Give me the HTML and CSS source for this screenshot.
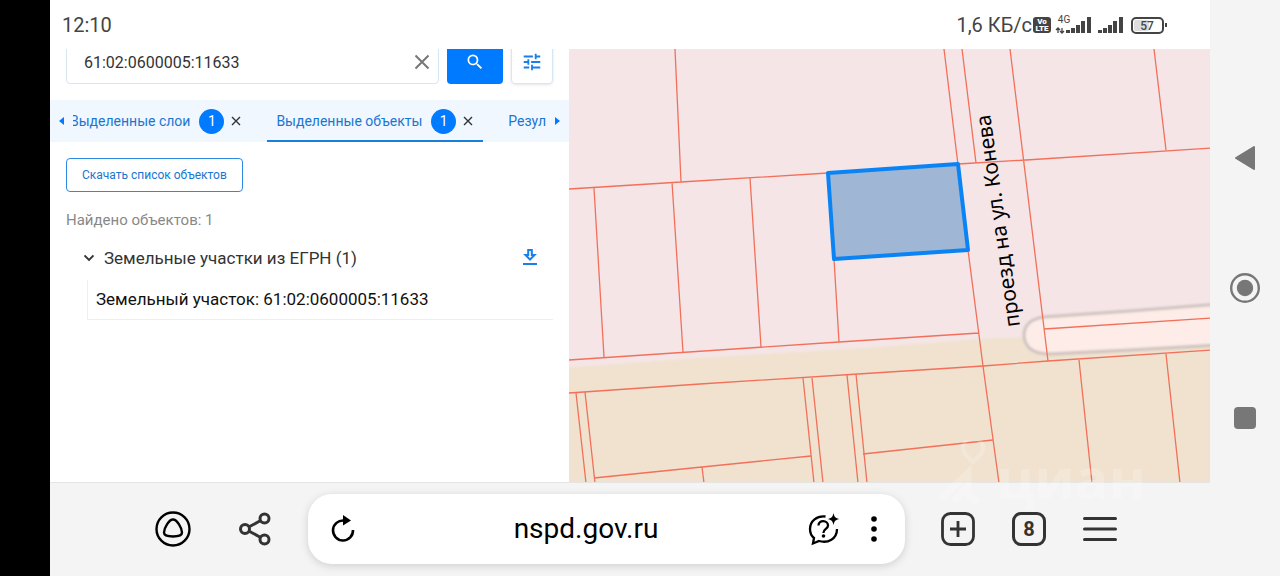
FILE: index.html
```html
<!DOCTYPE html>
<html lang="ru">
<head>
  <meta charset="UTF-8">
  <meta name="viewport" content="width=device-width, initial-scale=1.0">
  <title>nspd.gov.ru</title>
  <link rel="stylesheet" href="styles.css">
</head>
<body>
  <div class="cutout"></div>

  <div class="screen">
    <header class="status-bar">
      <span class="clock">12:10</span>
      <div class="status-right">
        <span class="speed">1,6 КБ/с</span>
        <svg class="status-icons" width="136" height="24" viewBox="0 0 136 24" aria-hidden="true">
          <rect x="1" y="4" width="18" height="16" rx="3" fill="#444"/>
          <text x="10" y="11" class="volte">Vo</text>
          <text x="10" y="18" class="volte">LTE</text>
          <text x="32" y="10" class="net">4G</text>
          <path d="M26 20v-5M30 15v5M24 17l2-2 2 2M28 18l2 2 2-2" stroke="#444" stroke-width="1.3" fill="none"/>
          <path d="M36 20v-3M41 20v-5M46 20v-8M51 20V8M57 20V4" stroke="#444" stroke-width="4"/>
          <path d="M68 20v-3M73 20v-5M78 20v-8M83 20V8M89 20V4" stroke="#444" stroke-width="4"/>
          <rect x="100" y="5" width="31" height="15" rx="4" fill="#fff" stroke="#444" stroke-width="2"/>
          <rect x="102" y="7" width="15" height="11" rx="2" fill="#ddd"/>
          <text x="115" y="17" class="charge">57</text>
          <path d="M134 10v4" stroke="#444" stroke-width="2"/>
        </svg>
      </div>
    </header>

    <main class="content">
      <section class="panel">
        <form class="search">
          <div class="search-field">
            <input type="text" id="searchInput" value="61:02:0600005:11633" aria-label="Поиск">
            <button type="button" class="icon-btn" aria-label="Очистить">
              <svg width="16" height="16" viewBox="0 0 16 16"><path d="M1.500 1.500l13 13M14.500 1.500l-13 13" stroke="#777" stroke-width="2"/></svg>
            </button>
          </div>
          <button type="button" class="search-btn" aria-label="Найти">
            <svg width="20" height="20" viewBox="0 0 24 24"><path fill="#fff" d="M15.500 14h-.79l-.28-.27A6.471 6.471 0 0 0 16 9.500 6.500 6.500 0 1 0 9.500 16c1.610 0 3.090-.59 4.230-1.570l.27.28v.79l5 4.990L20.490 19l-4.990-5zm-6 0C7.010 14 5 11.990 5 9.500S7.010 5 9.500 5 14 7.010 14 9.500 11.990 14 9.500 14z"/></svg>
          </button>
          <button type="button" class="filter-btn" aria-label="Фильтры">
            <svg width="22" height="22" viewBox="0 0 24 24"><path fill="#1a7fe8" d="M3 17v2h6v-2H3zM3 5v2h10V5H3zm10 16v-2h8v-2h-8v-2h-2v6h2zM7 9v2H3v2h4v2h2V9H7zm14 4v-2H11v2h10zm-6-4h2V7h4V5h-4V3h-2v6z"/></svg>
          </button>
        </form>

        <nav class="tabs">
          <button type="button" class="arrow" aria-label="Назад"><svg width="5" height="8" viewBox="0 0 5 8"><path d="M5 0v8L0 4z" fill="#007bff"/></svg></button>
          <div class="tabs-view">
            <div class="tabs-track">
              <div class="tab">
                <button type="button" class="tab-label">Выделенные слои <span class="badge">1</span></button>
                <button type="button" class="icon-btn" aria-label="Закрыть"><svg width="10" height="10" viewBox="0 0 10 10"><path d="M1 1l8 8M9 1l-8 8" stroke="#333" stroke-width="1.400"/></svg></button>
              </div>
              <div class="tab active">
                <button type="button" class="tab-label">Выделенные объекты <span class="badge">1</span></button>
                <button type="button" class="icon-btn" aria-label="Закрыть"><svg width="10" height="10" viewBox="0 0 10 10"><path d="M1 1l8 8M9 1l-8 8" stroke="#333" stroke-width="1.400"/></svg></button>
              </div>
              <div class="tab">
                <button type="button" class="tab-label">Результаты</button>
              </div>
            </div>
          </div>
          <button type="button" class="arrow" aria-label="Вперёд"><svg width="5" height="8" viewBox="0 0 5 8"><path d="M0 0v8l5-4z" fill="#007bff"/></svg></button>
        </nav>

        <div class="results">
          <button type="button" class="download-list">Скачать список объектов</button>
          <p class="found">Найдено объектов: 1</p>
          <div class="group">
            <button type="button" class="group-title">
              <svg width="10" height="8" viewBox="0 0 10 8"><path d="M0.500 1.500L5 6l4.500-4.500" fill="none" stroke="#333" stroke-width="1.800"/></svg>
              Земельные участки из ЕГРН (1)
            </button>
            <button type="button" class="icon-btn" aria-label="Скачать">
              <svg width="14" height="18" viewBox="0 0 14 18"><path d="M5.200 1h3.600v5h2.700L7 10.500 2.500 6h2.700z" fill="none" stroke="#1a7fe8" stroke-width="2"/><path d="M0 15h14" stroke="#1a7fe8" stroke-width="2"/></svg>
            </button>
          </div>
          <a href="#" class="item">Земельный участок: 61:02:0600005:11633</a>
        </div>
      </section>

      <section class="map">
        <svg class="map-canvas" viewBox="569 49 641 433" preserveAspectRatio="xMidYMid slice">
          <defs>
            <filter id="soft" x="-10%" y="-50%" width="120%" height="200%"><feGaussianBlur stdDeviation="1.2"/></filter>
          </defs>
          <rect x="560" y="40" width="660" height="453" fill="#f5e5e6"/>
          <path filter="url(#soft)" d="M560 368L700 358 880 347 980 339 1030 337 1220 337V493H560z" fill="#f0e2cf"/>
          <path filter="url(#soft)" d="M1045 318L1220 305V240H1045z" fill="#f5e5e6"/>
          <path filter="url(#soft)" d="M1220 304L1130 311 1044 317C1030 319 1024 325 1024 336 1025 348 1034 354 1050 354L1130 350 1220 345" fill="#fdece8" stroke="#cfc2bf" stroke-width="3"/>
          <g class="plots">
            <path d="M569 189L681 182 828 173M675 49L681 182M594 188L604 357M672 182L683 352M750 178L761 347M834 259L839 342"/>
            <path d="M569 360L839 342 979 333M944 49L958 165M962 49L976 163M958 164L1026 160 1211 148M1010 49L1026 180 1048 361M1154 49L1166 150M968 250L983 366 999 483"/>
            <path d="M569 393L700 384 858 374 983 366 1048 361 1211 350M1044 329L1211 318"/>
            <path d="M576 393L586 483M585 392L595 483M803 378L814 483M812 378L823 483M847 375L858 483M856 374L867 483"/>
            <path d="M594 478L702 467 811 456M702 467L704 483M863 454L993 440M1079 360L1092 483M1166 354L1180 483"/>
          </g>
          <path class="selected-plot" d="M828 173L958 164 968 250 834 259z"/>
          <text class="street" transform="translate(1020 326) rotate(-98)">проезд на ул. Конева</text>
        </svg>
      </section>
    </main>

    <footer class="browser-bar">
      <div class="bar-group">
        <button type="button" class="icon-btn" aria-label="Алиса">
          <svg width="36" height="36" viewBox="0 0 36 36" fill="none" stroke="#000" stroke-width="2.400"><circle cx="18" cy="18" r="16.500"/><path d="M18 8.500c-4 0-9 8.500-9 13 0 3 4 4 9 4s9-1 9-4c0-4.500-5-13-9-13z"/></svg>
        </button>
        <button type="button" class="icon-btn" aria-label="Поделиться">
          <svg width="32" height="34" viewBox="0 0 32 34" fill="none" stroke="#333" stroke-width="3"><circle cx="6" cy="17" r="4.500"/><circle cx="25.500" cy="6.500" r="4.500"/><circle cx="25.500" cy="27.500" r="4.500"/><path d="M10.200 14.800l11-6M10.200 19.200l11 6"/></svg>
        </button>
      </div>
      <div class="address">
        <button type="button" class="icon-btn" aria-label="Обновить">
          <svg width="24" height="28" viewBox="0 0 24 28"><path d="M13 5.500A10 10 0 1 0 22 15" fill="none" stroke="#000" stroke-width="2.600"/><path d="M12 0l8 5.500-8 5z" fill="#000"/></svg>
        </button>
        <a href="#" class="url">nspd.gov.ru</a>
        <div class="address-tools">
          <button type="button" class="icon-btn" aria-label="Спросить">
            <svg width="34" height="34" viewBox="0 0 34 34" fill="none" stroke="#000" stroke-width="2.300"><path d="M18.500 4.500C10 3.500 3 9 3 17c0 4 1.500 7 4 9l-1 5.500 6-2.500c9 2.500 18-2 18-12"/><path d="M11.500 13.500c0-6 9.500-5.500 9.500 0 0 3.500-4.600 3.500-4.600 7.500"/><circle cx="16.500" cy="24" r="1.800" fill="#000" stroke="none"/><path d="M26.500 1c.8 4 2 5.200 6 6-4 .8-5.200 2-6 6-.8-4-2-5.200-6-6 4-.8 5.200-2 6-6z" fill="#000" stroke="none"/></svg>
          </button>
          <button type="button" class="icon-btn" aria-label="Ещё">
            <svg width="6" height="28" viewBox="0 0 6 28"><circle cx="3" cy="4" r="2.800"/><circle cx="3" cy="14" r="2.800"/><circle cx="3" cy="24" r="2.800"/></svg>
          </button>
        </div>
      </div>
      <div class="bar-group">
        <button type="button" class="icon-btn" aria-label="Новая вкладка">
          <svg width="34" height="34" viewBox="0 0 34 34" fill="none" stroke="#333" stroke-width="2.800"><rect x="1.500" y="1.500" width="31" height="31" rx="8"/><path d="M9 17h16M17 9v16"/></svg>
        </button>
        <button type="button" class="tab-count" aria-label="Вкладки">8</button>
        <button type="button" class="icon-btn" aria-label="Меню">
          <svg width="34" height="26" viewBox="0 0 34 26" stroke="#333" stroke-width="3" stroke-linecap="round"><path d="M1.500 2.500h31M1.500 13h31M1.500 23.500h31"/></svg>
        </button>
      </div>
    </footer>
  </div>

  <nav class="system-nav">
    <button type="button" class="icon-btn" aria-label="Назад">
      <svg width="22" height="26" viewBox="0 0 22 26"><path d="M20 2v22L2 13z" fill="#777" stroke="#777" stroke-width="2" stroke-linejoin="round"/></svg>
    </button>
    <button type="button" class="icon-btn" aria-label="Домой">
      <svg width="32" height="32" viewBox="0 0 32 32"><circle cx="16" cy="16" r="13.800" fill="none" stroke="#777" stroke-width="2.400"/><circle cx="16" cy="16" r="8.200" fill="#777"/></svg>
    </button>
    <button type="button" class="icon-btn" aria-label="Недавние">
      <svg width="22" height="22" viewBox="0 0 22 22"><rect width="22" height="22" rx="4" fill="#777"/></svg>
    </button>
  </nav>

  <svg class="watermark" width="236" height="96" viewBox="0 0 236 96" aria-hidden="true">
    <path d="M41 22l-8-8a10 10 0 1 1 16 0z" fill="none" stroke="#fff" stroke-width="4"/>
    <path d="M8 59l28-26v20M22 61l10-11 14 13" fill="none" stroke="#fff" stroke-width="7"/>
    <text x="64" y="59">циан</text>
  </svg>
</body>
</html>
```
FILE: styles.css
```css
* {
  box-sizing: border-box;
}
body {
  margin: 0;
  min-height: 100vh;
  display: flex;
  position: relative;
  background: #f4f4f4;
  color: #333;
  font-family: Roboto, sans-serif;
  font-size: 16px;
}
button {
  font-family: inherit;
  border: none;
  background: none;
  padding: 0;
  color: inherit;
  cursor: pointer;
}
svg {
  display: block;
}
.icon-btn {
  display: flex;
  align-items: center;
  justify-content: center;
}

.cutout {
  width: 50px;
  background: #000;
}
.screen {
  flex: 1;
  min-width: 0;
  display: flex;
  flex-direction: column;
}

/* status bar */
.status-bar {
  height: 49px;
  padding: 0 42px 0 12px;
  display: flex;
  align-items: center;
  justify-content: space-between;
  background: #fff;
  color: #444;
  font-size: 20px;
}
.status-right {
  display: flex;
  align-items: center;
}
.volte {
  font-size: 8px;
  font-weight: 900;
  text-anchor: middle;
  fill: #fff;
}
.net {
  font-size: 10px;
  text-anchor: middle;
  fill: #444;
}
.charge {
  font-size: 12px;
  font-weight: 500;
  text-anchor: middle;
  fill: #444;
}

/* content */
.content {
  flex: 1;
  display: flex;
  min-height: 0;
}
.panel {
  width: 519px;
  flex-shrink: 0;
  overflow: hidden;
  background: #fff;
}
.search {
  display: flex;
  gap: 8px;
  margin-top: -9px;
  padding: 0 16px;
  height: 44px;
}
.search-field {
  flex: 1;
  display: flex;
  align-items: center;
  padding: 0 8px 0 17px;
  border: 1px solid #d5e6f5;
  border-radius: 4px;
}
.search-field input {
  flex: 1;
  min-width: 0;
  padding: 0;
  border: none;
  outline: none;
  font: inherit;
  color: #333;
}
.search-btn,
.filter-btn {
  display: flex;
  align-items: center;
  justify-content: center;
  border-radius: 4px;
}
.search-btn {
  width: 56px;
  background: #007bff;
}
.filter-btn {
  width: 42px;
  border: 1px solid #d5e6f5;
  box-shadow: 0 1px 3px rgba(0, 0, 0, 0.1);
}

.tabs {
  display: flex;
  height: 42px;
  margin-top: 16px;
  padding: 0 9px;
  background: #f0f7ff;
}
.arrow {
  width: 14px;
  display: flex;
  align-items: center;
}
.arrow:last-child {
  justify-content: flex-end;
}
.tabs-view {
  flex: 1;
  overflow: hidden;
}
.tabs-track {
  display: flex;
  gap: 16px;
  height: 100%;
  margin-left: -12px;
}
.tab {
  display: flex;
  flex-shrink: 0;
  align-items: center;
  gap: 7px;
  padding: 0 10px 0 9px;
}
.tab.active {
  box-shadow: inset 0 -2px #1a7fd9;
}
.tab-label {
  display: flex;
  align-items: center;
  gap: 9px;
  font-size: 14px;
  color: #1976d2;
}
.badge {
  width: 25px;
  height: 25px;
  border-radius: 50%;
  background: #007bff;
  color: #fff;
  line-height: 25px;
}

.results {
  padding: 16px;
}
.download-list {
  display: block;
  height: 34px;
  padding: 0 15px;
  border: 1px solid #2b8be0;
  border-radius: 4px;
  font-size: 12px;
  color: #1976d2;
}
.found {
  margin: 18px 0 0;
  line-height: 20px;
  font-size: 15px;
  color: #888;
}
.group {
  display: flex;
  align-items: center;
  justify-content: space-between;
  height: 44px;
  margin-top: 6px;
  padding: 0 16px 0 18px;
}
.group-title {
  display: flex;
  align-items: center;
  gap: 10px;
  font-size: 17px;
}
.item {
  display: block;
  margin-left: 21px;
  padding: 7px 8px 8px;
  border-left: 1px solid #eee;
  border-bottom: 1px solid #eee;
  font-size: 17px;
  line-height: 24px;
  color: #111;
  text-decoration: none;
}

/* map */
.map {
  flex: 1;
  min-width: 0;
  position: relative;
}
.map-canvas {
  position: absolute;
  width: 100%;
  height: 100%;
}
.plots {
  fill: none;
  stroke: #f2705a;
  stroke-width: 1.3;
}
.selected-plot {
  fill: #9fb7d5;
  stroke: #0a84f5;
  stroke-width: 4;
  stroke-linejoin: round;
}
.street {
  font-family: "Noto Sans", sans-serif;
  font-size: 21px;
  fill: #000;
}

/* browser bar */
.browser-bar {
  display: flex;
  align-items: center;
  height: 94px;
  padding: 0 93px 2px 105px;
  border-top: 1px solid #e5e5e5;
}
.bar-group {
  display: flex;
  align-items: center;
  gap: 48px;
}
.bar-group:last-child {
  gap: 37px;
}
.address {
  flex: 1;
  display: flex;
  align-items: center;
  justify-content: space-between;
  height: 70px;
  margin: 0 36px 0 37px;
  padding: 0 28px 0 23px;
  border-radius: 24px;
  background: #fff;
  box-shadow: 0 2px 8px rgba(0, 0, 0, 0.15);
}
.url {
  margin-left: 10px;
  font-size: 28px;
  color: #000;
  text-decoration: none;
}
.address-tools {
  display: flex;
  align-items: center;
  gap: 30px;
}
.tab-count {
  width: 34px;
  height: 34px;
  border: 3px solid #333;
  border-radius: 9px;
  font-size: 20px;
  font-weight: 700;
  line-height: 28px;
  color: #333;
}

/* system navigation */
.system-nav {
  width: 70px;
  display: flex;
  flex-direction: column;
  align-items: center;
  justify-content: center;
  gap: 98px;
}
.system-nav .icon-btn {
  height: 32px;
}

.watermark {
  position: absolute;
  right: 112px;
  bottom: 40px;
  opacity: 0.2;
  pointer-events: none;
}
.watermark text {
  font-family: "Open Sans", sans-serif;
  font-size: 56px;
  font-weight: 700;
  fill: #fff;
}
```
